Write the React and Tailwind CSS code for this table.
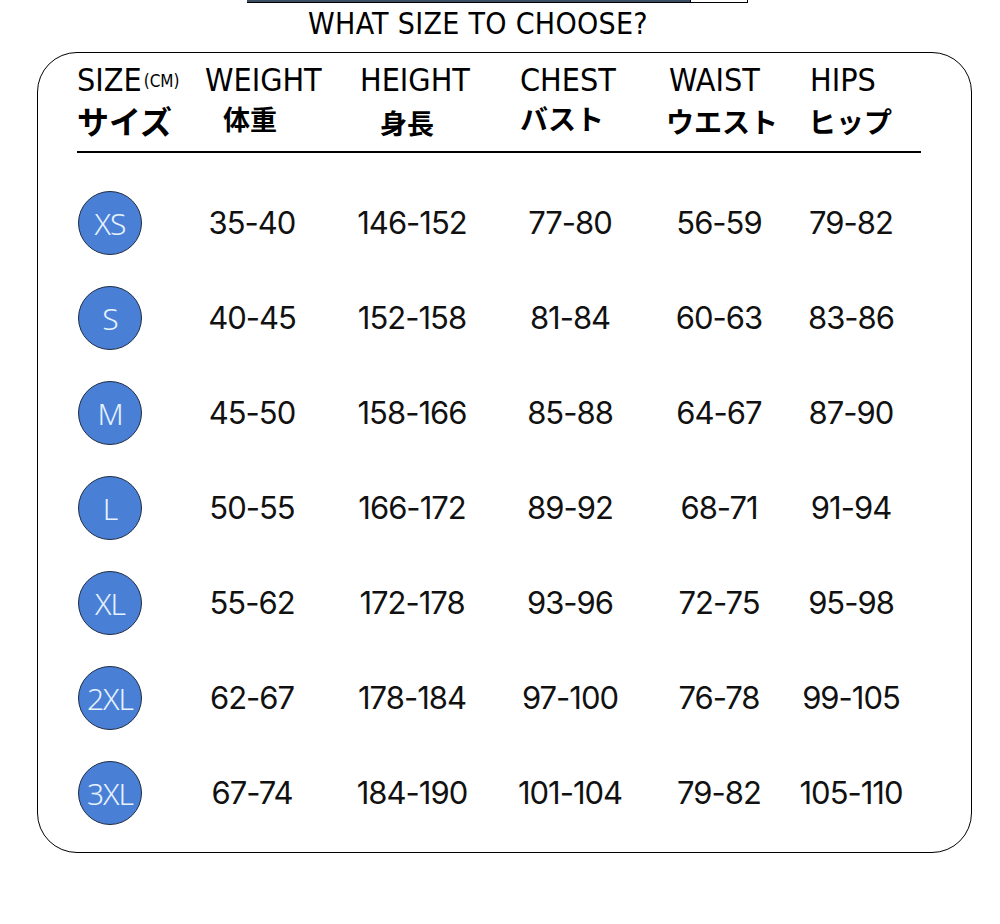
const rows = [
  ["XS", "35-40", "146-152", "77-80", "56-59", "79-82"],
  ["S", "40-45", "152-158", "81-84", "60-63", "83-86"],
  ["M", "45-50", "158-166", "85-88", "64-67", "87-90"],
  ["L", "50-55", "166-172", "89-92", "68-71", "91-94"],
  ["XL", "55-62", "172-178", "93-96", "72-75", "95-98"],
  ["2XL", "62-67", "178-184", "97-100", "76-78", "99-105"],
  ["3XL", "67-74", "184-190", "101-104", "79-82", "105-110"],
];

const narrow = "font-['Liberation_Sans_Narrow','DejaVu_Sans_Condensed',sans-serif]";
const jp = "font-['Noto_Sans_CJK_JP',sans-serif] font-bold";

export default function App() {
  return (
    <div className="w-[1000px] h-[924px] bg-white text-black overflow-hidden">

      {/* cut-off banner at the top */}
      <div className="flex ml-[247px] w-[501px] h-[3px]">
        <div className="flex-1 bg-[#3b4d63] border-b border-black" />
        <div className="w-[58px] border border-t-0 border-black bg-white" />
      </div>

      {/* TITLE */}
      <div className={`flex justify-center pr-[44px] mt-[6px] text-[30px] leading-[30px] tracking-[0.3px] ${narrow}`}>
        WHAT SIZE TO CHOOSE?
      </div>

      {/* CARD */}
      <div className="ml-[37px] mt-[13px] w-[935px] h-[801px] border-[1.5px] border-black rounded-[40px] pl-[39px] pt-[11px]">

        {/* HEADER */}
        <div className="grid grid-cols-[128px_155px_160px_149px_141px_1fr]">
          <div>
            <div className={`text-[32px] leading-[32px] ${narrow}`}>
              SIZE<span className="text-[17px] ml-[2px] align-[4px]">(CM)</span>
            </div>
            <div className={`text-[32px] leading-[32px] mt-[7px] ${jp}`}>サイズ</div>
          </div>
          <div>
            <div className={`text-[32px] leading-[32px] ${narrow}`}>WEIGHT</div>
            <div className={`text-[27px] leading-[30px] mt-[8px] ml-[18px] ${jp}`}>体重</div>
          </div>
          <div>
            <div className={`text-[32px] leading-[32px] ${narrow}`}>HEIGHT</div>
            <div className={`text-[27px] leading-[30px] mt-[12px] ml-[20px] ${jp}`}>身長</div>
          </div>
          <div>
            <div className={`text-[32px] leading-[32px] ${narrow}`}>CHEST</div>
            <div className={`text-[28px] leading-[30px] mt-[7px] ${jp}`}>バスト</div>
          </div>
          <div>
            <div className={`text-[32px] leading-[32px] ${narrow}`}>WAIST</div>
            <div className={`text-[28px] leading-[30px] mt-[10px] -ml-[3px] ${jp}`}>ウエスト</div>
          </div>
          <div>
            <div className={`text-[32px] leading-[32px] ${narrow}`}>HIPS</div>
            <div className={`text-[28px] leading-[30px] mt-[10px] -ml-[2px] ${jp}`}>ヒップ</div>
          </div>
        </div>

        <div className="w-[844px] h-[1.5px] bg-black mt-[13px]" />

        {/* ROWS */}
        <div className="mt-[23px]">
          {rows.map(([size, ...vals]) => (
            <div key={size} className="grid grid-cols-[110px_130px_190px_126px_172px_92px] h-[95px] items-center">
              <div className="w-16 h-16 ml-px rounded-full bg-[#4a7fd6] border border-[#1d2c44] flex items-center justify-center text-[#e6f2ff] text-[30px] font-['Noto_Sans',sans-serif] font-light tracking-[-1px]">
                {size}
              </div>
              {vals.map((v, i) => (
                <div key={i} className="flex justify-center text-[31px] text-[#111] font-['Inter',sans-serif] tracking-[-1px] whitespace-nowrap">
                  {v}
                </div>
              ))}
            </div>
          ))}
        </div>
      </div>
    </div>
  );
}
